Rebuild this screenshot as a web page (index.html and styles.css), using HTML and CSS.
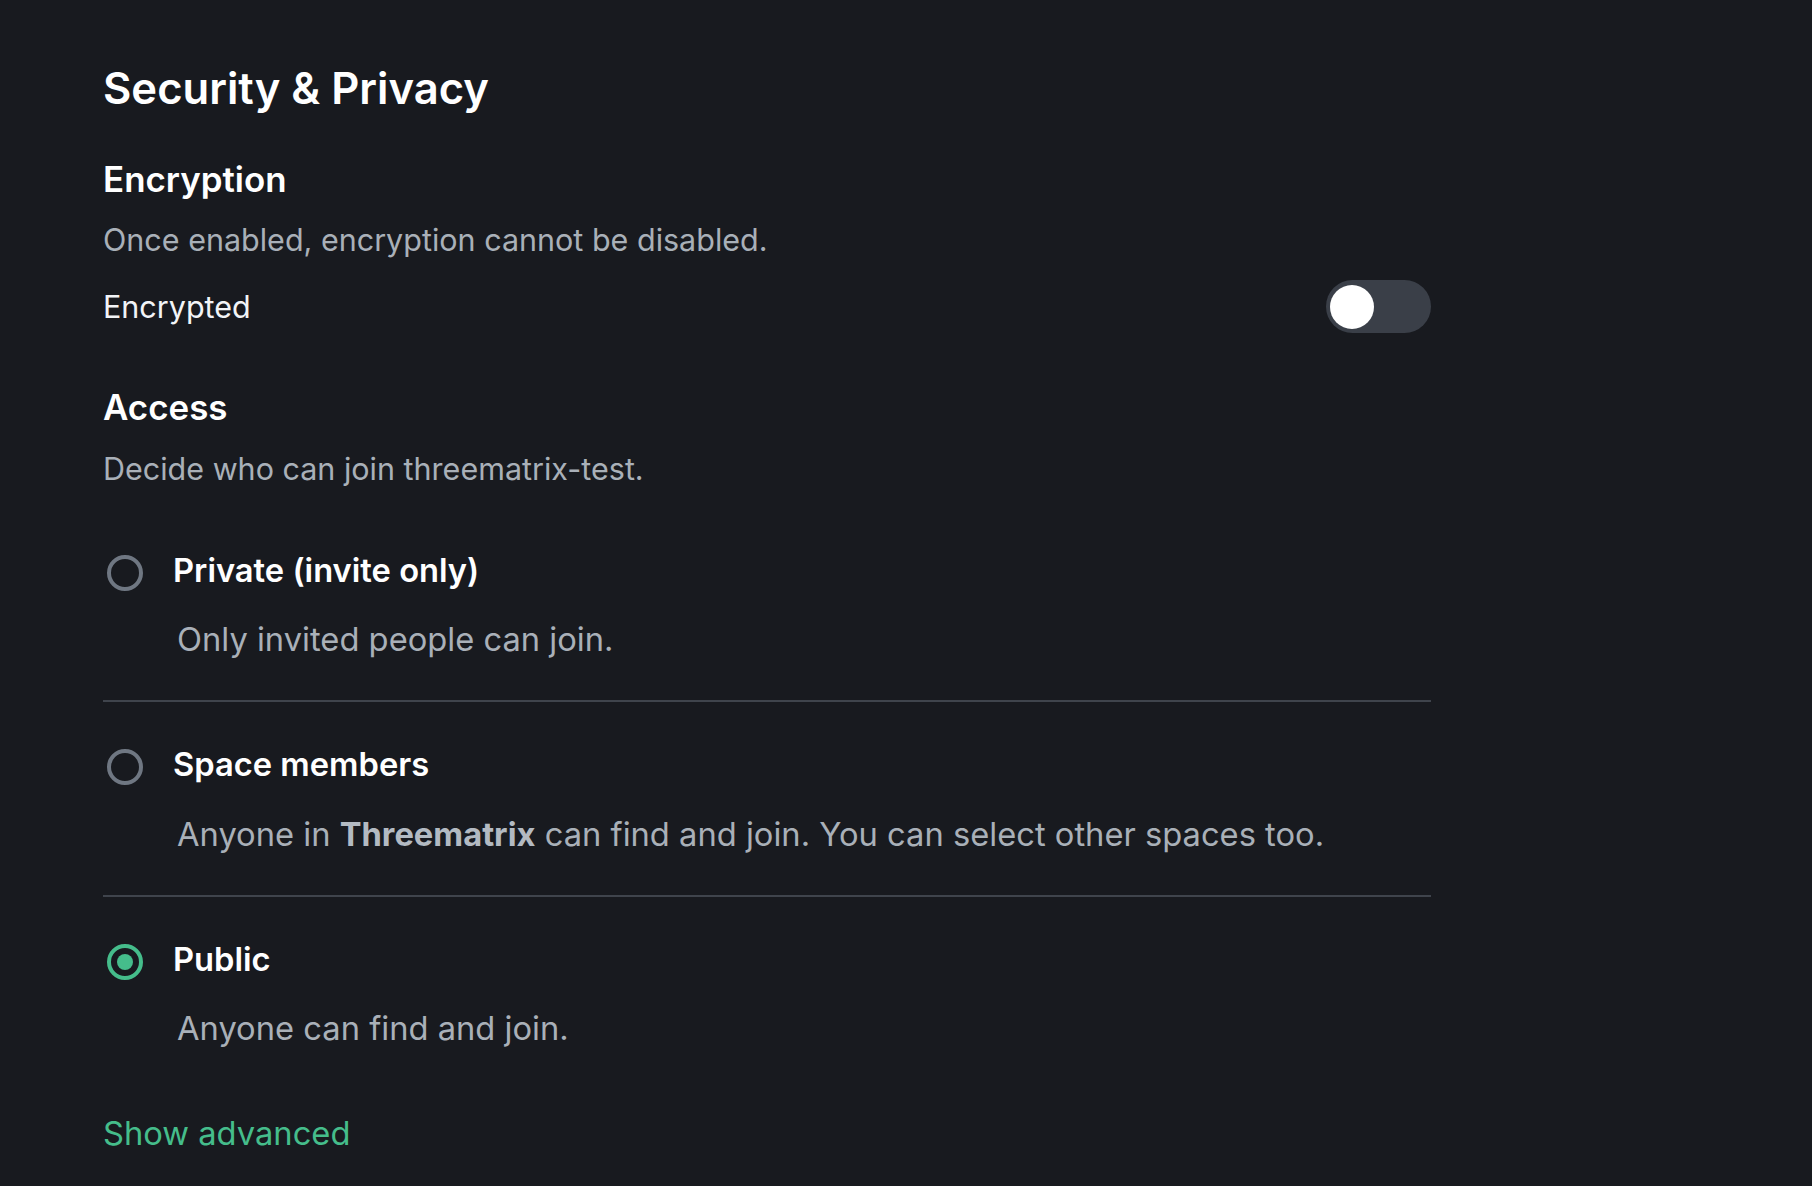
FILE: index.html
```html
<!DOCTYPE html>
<html lang="en">
<head>
<meta charset="utf-8">
<title>Security &amp; Privacy</title>
<link rel="stylesheet" href="styles.css">
</head>
<body>
<main class="tab">
  <h1 class="heading">Security &amp; Privacy</h1>

  <section class="section">
    <h2 class="subheading">Encryption</h2>
    <p class="subtext">Once enabled, encryption cannot be disabled.</p>
    <div class="toggle-row">
      <span class="toggle-label">Encrypted</span>
      <div class="toggle" role="switch" aria-checked="false"><span class="knob"></span></div>
    </div>
  </section>

  <section class="section access">
    <h2 class="subheading">Access</h2>
    <p class="subtext">Decide who can join threematrix-test.</p>

    <div class="options">
      <div class="option">
        <div class="option-head">
          <span class="radio"></span>
          <span class="option-label">Private (invite only)</span>
        </div>
        <p class="option-desc">Only invited people can join.</p>
      </div>
      <div class="option">
        <div class="option-head">
          <span class="radio"></span>
          <span class="option-label">Space members</span>
        </div>
        <p class="option-desc">Anyone in <b>Threematrix</b> can find and join. You can select other spaces too.</p>
      </div>
      <div class="option">
        <div class="option-head">
          <span class="radio checked"></span>
          <span class="option-label">Public</span>
        </div>
        <p class="option-desc">Anyone can find and join.</p>
      </div>
    </div>

    <a class="advanced" href="#">Show advanced</a>
  </section>
</main>
</body>
</html>
```

FILE: styles.css
```css
html, body {
  margin: 0;
  padding: 0;
  background: #181a1f;
}

body {
  font-family: Inter, "Noto Sans", "Liberation Sans", sans-serif;
  color: #ffffff;
  height: 1186px;
  overflow: hidden;
}

.tab {
  width: 1328px;
  padding: 64.5px 0 0 103px;
}

.heading {
  margin: 0;
  font-size: 43.6px;
  line-height: 48px;
  font-weight: 600;
}

.section {
  margin-top: 44.5px;
}

.section.access {
  margin-top: 52px;
}

.subheading {
  margin: 0;
  font-size: 34.9px;
  line-height: 44px;
  font-weight: 600;
}

.subtext {
  margin: 19.3px 0 0;
  font-size: 30.5px;
  line-height: 40px;
  color: #a9b0b8;
}

.toggle-row {
  margin-top: 20px;
  display: flex;
  align-items: center;
  justify-content: space-between;
}

.toggle-label {
  font-size: 30.5px;
  line-height: 40px;
  color: #f2f4f7;
}

.toggle {
  width: 105px;
  height: 53px;
  border-radius: 27px;
  background: #3a3f48;
  box-sizing: border-box;
  padding: 0 4px;
  display: flex;
  align-items: center;
}

.knob {
  width: 44px;
  height: 44px;
  border-radius: 50%;
  background: #ffffff;
}

.options {
  margin-top: 19px;
}

.option {
  padding: 42px 0 41px;
  border-bottom: 2px solid #3f444c;
}

.option:last-child {
  border-bottom: none;
}

.option-head {
  display: flex;
  align-items: flex-start;
}

.radio {
  flex: none;
  box-sizing: border-box;
  width: 36px;
  height: 36px;
  margin: 5px 0 0 4px;
  border: 4px solid #6f7782;
  border-radius: 50%;
  display: flex;
  align-items: center;
  justify-content: center;
}

.radio.checked {
  border-color: #45bd8b;
}

.radio.checked::after {
  content: "";
  width: 16px;
  height: 16px;
  border-radius: 50%;
  background: #45bd8b;
}

.option-label {
  margin-left: 30px;
  font-size: 32.7px;
  line-height: 40px;
  font-weight: 600;
  color: #ffffff;
}

.option-desc {
  margin: 28.5px 0 0 74px;
  font-size: 32.7px;
  line-height: 40px;
  color: #a9b0b8;
}

.option-desc b {
  font-weight: 700;
  color: #b3bac2;
}

.advanced {
  display: inline-block;
  margin-top: 23.5px;
  font-size: 32.7px;
  line-height: 40px;
  color: #45bd8b;
  text-decoration: none;
}
```
